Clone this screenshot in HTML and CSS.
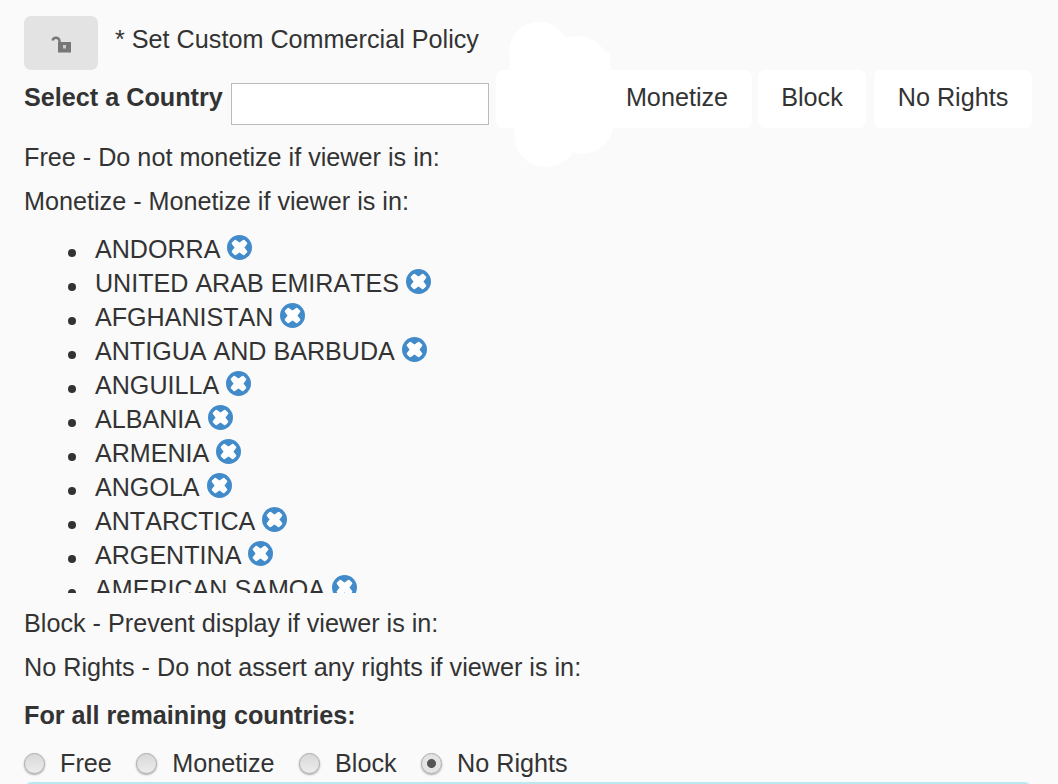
FILE: index.html
```html
<!DOCTYPE html>
<html lang="en">

<head>
  <meta charset="UTF-8" />
  <title>Set Custom Commercial Policy</title>
  <link rel="stylesheet" href="styles.css">
</head>

<body>
  <svg class="defs" width="0" height="0">
    <symbol id="remove" viewBox="0 0 24 24">
      <circle cx="12" cy="12" r="12" fill="#428bca" />
      <path d="M8 5.5 12 8.500l4-3 2.500 2.500-3 4 3 4-2.500 2.500-4-3-4 3L5.500 16l3-4-3-4z" fill="#fff" stroke="#fff" stroke-width="2" stroke-linejoin="round" />
    </symbol>
  </svg>

  <div class="container">
    <div class="title-row">
      <button class="lock-btn" aria-label="Locked">
        <svg class="lock-icon" width="20" height="20" viewBox="0 0 20 20">
          <path d="M1.500 5.500C2.500 1.800 7.500 2 8.500 5.500V8" fill="none" stroke="#777" stroke-width="2.400" />
          <rect x="7" y="7" width="13" height="10.500" fill="#777" />
          <rect x="12" y="10" width="3" height="3.500" fill="#ccc" />
        </svg>
      </button>
      <span class="title">* Set Custom Commercial Policy</span>
    </div>

    <div class="country-row">
      <label class="country-label" for="country">Select a Country</label>
      <input class="country-input" type="text" id="country" />
      <div class="btn-group">
        <button class="policy-btn free-btn">Free</button>
        <button class="policy-btn monetize-btn">Monetize</button>
        <button class="policy-btn block-btn">Block</button>
        <button class="policy-btn rights-btn">No Rights</button>
      </div>
      <!-- scribble over the first button -->
      <svg class="scribble" width="120" height="150" viewBox="0 0 120 150">
        <circle cx="31" cy="30" r="30" fill="#fff" />
        <circle cx="70" cy="45" r="31" fill="#fff" />
        <circle cx="38" cy="113" r="32" fill="#fff" />
        <circle cx="74" cy="100" r="32" fill="#fff" />
        <rect x="2" y="30" width="100" height="70" fill="#fff" />
      </svg>
    </div>

    <p class="policy-text first">Free - Do not monetize if viewer is in:</p>
    <p class="policy-text">Monetize - Monetize if viewer is in:</p>

    <ul class="country-list">
      <li>ANDORRA <svg class="remove" width="25" height="25"><use href="#remove" /></svg></li>
      <li>UNITED ARAB EMIRATES <svg class="remove" width="25" height="25"><use href="#remove" /></svg></li>
      <li>AFGHANISTAN <svg class="remove" width="25" height="25"><use href="#remove" /></svg></li>
      <li>ANTIGUA AND BARBUDA <svg class="remove" width="25" height="25"><use href="#remove" /></svg></li>
      <li>ANGUILLA <svg class="remove" width="25" height="25"><use href="#remove" /></svg></li>
      <li>ALBANIA <svg class="remove" width="25" height="25"><use href="#remove" /></svg></li>
      <li>ARMENIA <svg class="remove" width="25" height="25"><use href="#remove" /></svg></li>
      <li>ANGOLA <svg class="remove" width="25" height="25"><use href="#remove" /></svg></li>
      <li>ANTARCTICA <svg class="remove" width="25" height="25"><use href="#remove" /></svg></li>
      <li>ARGENTINA <svg class="remove" width="25" height="25"><use href="#remove" /></svg></li>
      <li>AMERICAN SAMOA <svg class="remove" width="25" height="25"><use href="#remove" /></svg></li>
    </ul>

    <p class="policy-text block-text">Block - Prevent display if viewer is in:</p>
    <p class="policy-text">No Rights - Do not assert any rights if viewer is in:</p>

    <p class="remaining">For all remaining countries:</p>

    <div class="radio-row">
      <label class="radio-item"><input type="radio" name="remaining" />Free</label>
      <label class="radio-item"><input type="radio" name="remaining" />Monetize</label>
      <label class="radio-item"><input type="radio" name="remaining" />Block</label>
      <label class="radio-item"><input type="radio" name="remaining" checked />No Rights</label>
    </div>
    <div class="next-panel"></div>
  </div>
</body>

</html>
```

FILE: styles.css
```css
html,
body {
  margin: 0;
  padding: 0;
  height: 784px;
  overflow: hidden;
}

body {
  font-family: "Liberation Sans", Arial, sans-serif;
  font-size: 25.2px;
  font-kerning: none;
  color: #333;
  background-color: #fafafa;
}

.defs {
  display: block;
}

.container {
  padding: 16px 26px 0 24px;
}

.title-row {
  display: flex;
  align-items: flex-start;
  height: 54px;
}

.lock-btn {
  width: 74px;
  height: 54px;
  padding: 4px 0 0;
  border: none;
  border-radius: 7px;
  background-color: #e3e3e3;
  display: flex;
  justify-content: center;
  align-items: center;
}

.lock-icon {
  filter: blur(0.5px);
}

.title {
  margin-left: 17px;
  line-height: 46px;
}

.country-row {
  position: relative;
  display: flex;
  align-items: flex-start;
  height: 58px;
}

.country-label {
  font-weight: bold;
  line-height: 54px;
}

.country-input {
  width: 258px;
  height: 42px;
  margin: 13px 0 0 8px;
  padding: 0;
  box-sizing: border-box;
  border: 1px solid #bbb;
  background-color: #fff;
}

.btn-group {
  position: absolute;
  left: 472px;
  top: 0;
  display: flex;
  gap: 6px;
}

.policy-btn {
  height: 58px;
  padding: 0 0 4px;
  border: none;
  border-radius: 7px;
  background-color: #fff;
  color: #333;
  font-family: inherit;
  font-size: inherit;
  font-kerning: none;
}

.free-btn {
  width: 100px;
}

.monetize-btn {
  width: 150px;
}

.block-btn {
  width: 108px;
}

.rights-btn {
  width: 158px;
  margin-left: 2px;
}

.scribble {
  position: absolute;
  left: 484px;
  top: -48px;
}

.policy-text {
  margin: 0;
  height: 44px;
  line-height: 44px;
}

.first {
  margin-top: 7px;
}

.country-list {
  height: 370px;
  margin: 0;
  padding: 9px 0 0 71px;
  box-sizing: border-box;
  overflow: hidden;
  list-style: none;
  font-size: 25.1px;
}

.country-list li {
  height: 34px;
  line-height: 34px;
}

.country-list li::before {
  content: "";
  display: inline-block;
  width: 8px;
  height: 8px;
  margin: 0 19px 0 -27px;
  border-radius: 50%;
  background-color: #333;
  vertical-align: 1px;
}

.remove {
  vertical-align: -2px;
}

.block-text {
  margin-top: 8px;
}

.remaining {
  margin: 0;
  height: 52px;
  line-height: 52px;
  font-weight: bold;
}

.radio-row {
  display: flex;
  gap: 24.5px;
  height: 44px;
  align-items: center;
}

.radio-item {
  display: flex;
  align-items: center;
  gap: 15px;
}

.radio-item input {
  appearance: none;
  width: 21px;
  height: 21px;
  margin: 0;
  border-radius: 50%;
  border: 1px solid #aaa;
  background: linear-gradient(#d8d8d8, #ececec);
  box-shadow: 0 1px 2px rgba(0, 0, 0, 0.35);
}

.radio-item input:checked {
  background: radial-gradient(circle, #555 0 4px, #e4e4e4 5px);
}

.next-panel {
  height: 20px;
  margin-top: -3px;
  border-top: 3px solid #b9e8f0;
  border-radius: 8px 8px 0 0;
}
```
